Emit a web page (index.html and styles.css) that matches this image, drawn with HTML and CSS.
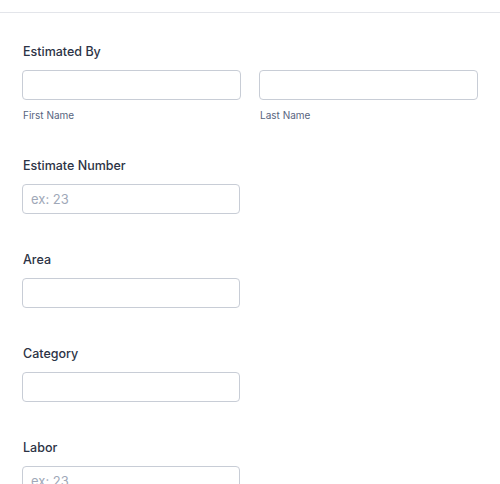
FILE: index.html
```html
<!DOCTYPE html>
<html>
<head>
<meta charset="utf-8">
<link rel="stylesheet" href="styles.css">
</head>
<body>
<div class="topbar"></div>
<form class="form">
  <div class="field">
    <div class="label">Estimated By</div>
    <div class="row">
      <div class="col">
        <input class="input half" type="text">
        <div class="sublabel">First Name</div>
      </div>
      <div class="col">
        <input class="input half" type="text">
        <div class="sublabel">Last Name</div>
      </div>
    </div>
  </div>
  <div class="field">
    <div class="label">Estimate Number</div>
    <input class="input" type="text" placeholder="ex: 23">
  </div>
  <div class="field">
    <div class="label">Area</div>
    <input class="input" type="text">
  </div>
  <div class="field">
    <div class="label">Category</div>
    <input class="input" type="text">
  </div>
  <div class="field">
    <div class="label">Labor</div>
    <input class="input" type="text" placeholder="ex: 23">
  </div>
</form>
</body>
</html>
```
FILE: styles.css
```css
html, body {
  margin: 0;
  padding: 0;
  background: #ffffff;
  font-family: Inter, "Noto Sans", sans-serif;
  overflow: hidden;
}
.topbar {
  height: 12px;
  border-bottom: 1px solid #e3e5ea;
}
.form {
  display: flex;
  flex-direction: column;
  gap: 38px;
  padding: 31px 22px 0 22px;
}
.field {
  display: flex;
  flex-direction: column;
}
.label {
  font-size: 12.5px;
  line-height: 16px;
  font-weight: 500;
  color: #2c3345;
  margin: 0 0 10px 1px;
}
.row {
  display: flex;
  gap: 18px;
}
.col {
  display: flex;
  flex-direction: column;
}
.input {
  box-sizing: border-box;
  width: 218px;
  height: 30px;
  margin: 0;
  border: 1px solid #c8cdd6;
  border-radius: 4px;
  padding: 0 8px;
  font-family: Inter, "Noto Sans", sans-serif;
  font-size: 13px;
  color: #2c3345;
  background: #ffffff;
  outline: none;
}
.input.half {
  width: 219px;
}
.input::placeholder {
  color: #a0a8b8;
}
.sublabel {
  font-size: 10px;
  line-height: 10px;
  color: #57647e;
  margin: 10px 0 0 1px;
}
```
